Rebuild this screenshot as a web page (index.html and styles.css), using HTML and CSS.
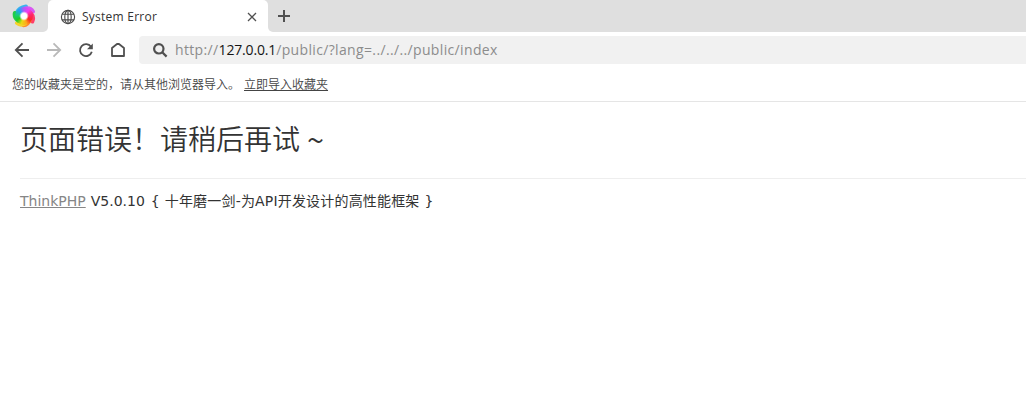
FILE: index.html
```html
<!DOCTYPE html>
<html lang="zh-CN">
<head>
<meta charset="utf-8">
<title>System Error</title>
<link rel="stylesheet" href="styles.css">
</head>
<body>
<header class="tabs">
  <div class="brand">
    <div class="logo">
      <svg width="24" height="24" viewBox="0 0 24 24" fill="none" stroke-width="4" stroke-linecap="round">
        <path d="M4.5 9Q7 3.5 14 2.5" stroke="#38b2ee"/>
        <path d="M12 5Q18 3 21 7.5" stroke="#d957f2"/>
        <path d="M18.5 9Q22.5 13 20.3 17.5" stroke="#ff3d68"/>
        <path d="M18 15.5Q16 21 11.5 21.2" stroke="#ff8a2c"/>
        <path d="M13 19.5Q8.5 22 5 19" stroke="#f6d22a"/>
        <path d="M6 16.5Q2 13.5 2.8 9" stroke="#1fcd48"/>
      </svg>
      <span class="ring"></span>
    </div>
  </div>
  <div class="tab">
    <svg class="globe" width="16" height="16" viewBox="0 0 16 16" fill="none" stroke="#4b4b4b" stroke-width="1.15"><circle cx="8" cy="8" r="6.6"/><ellipse cx="8" cy="8" rx="3.2" ry="6.6"/><path d="M8 1.4v13.2M2.2 5.2h11.6M2.2 10.8h11.6"/></svg>
    <span class="title">System Error</span>
    <svg class="close" width="10" height="10" viewBox="0 0 10 10" stroke="#505050" stroke-width="1.3"><path d="M1 1l8 8M9 1l-8 8"/></svg>
  </div>
  <div class="newtab"><svg width="12" height="12" viewBox="0 0 12 12" stroke="#505050" stroke-width="2"><path d="M0 6h12M6 0v12"/></svg></div>
</header>
<nav class="toolbar">
  <svg width="16" height="16" viewBox="0 0 16 16" fill="none" stroke="#505050" stroke-width="1.8"><path d="M15 8H2M8.5 1.3L1.8 8l6.7 6.7"/></svg>
  <svg width="16" height="16" viewBox="0 0 16 16" fill="none" stroke="#b9b9b9" stroke-width="1.8"><path d="M1 8h13M7.5 1.3L14.2 8l-6.7 6.7"/></svg>
  <svg width="16" height="16" viewBox="0 0 16 16" fill="none" stroke="#505050" stroke-width="1.8"><path d="M13 4.7A6 6 0 1 0 13.8 9.8"/><path d="M14.8 1.4v5.8H9z" fill="#505050" stroke="none"/></svg>
  <svg width="16" height="16" viewBox="0 0 16 16" fill="none" stroke="#505050" stroke-width="1.8" stroke-linejoin="round"><path d="M2 6L7 2h2l5 4v8H2z"/></svg>
  <div class="address">
    <svg width="16" height="16" viewBox="0 0 16 16" fill="none" stroke="#505050" stroke-width="2.2"><circle cx="6.8" cy="6.8" r="4.7"/><path d="M10 10l4.6 4.6"/></svg>
    <span class="url"><span class="scheme">http://</span><span class="host">127.0.0.1</span><span class="path">/public/?lang=../../../public/index</span></span>
  </div>
</nav>
<div class="bookmarks"><span>您的收藏夹是空的&#xFF0C;请从其他浏览器导入&#x3002;</span><a>立即导入收藏夹</a></div>
<main class="page">
  <h1>页面错误&#xFF01;请稍后再试<span class="tilde">~</span></h1>
  <footer><a class="product">ThinkPHP</a><span class="version">V5.0.10</span><span class="brace">{</span><span class="slogan">十年磨一剑-为API开发设计的高性能框架</span><span class="brace">}</span></footer>
</main>
</body>
</html>
```
FILE: styles.css
```css
* { box-sizing: border-box; }
body { margin: 0; background: #fff; overflow: hidden; font-family: "Open Sans", "Noto Sans CJK SC", sans-serif; color: #333; }
svg { display: block; flex: none; }
.tabs { height: 32px; display: flex; background: #fff; }
.brand { width: 48px; background: #dfdfdf; border-bottom-right-radius: 5px; padding: 4px 0 0 12px; }
.logo { position: relative; width: 24px; height: 24px; }
.logo svg { filter: blur(.4px); }
.ring { position: absolute; left: 3px; top: 3px; width: 18px; height: 18px; border-radius: 50%; background: radial-gradient(circle, #fff 0 2.8px, transparent 4.8px), conic-gradient(#b457fa, #f43bf0 40deg, #ff246e 80deg, #fa2a20 125deg, #ffa51b 160deg, #ead914 200deg, #1dcc20 240deg, #15ce6e 275deg, #239ffb 320deg, #b457fa); }
.tab { width: 220px; display: flex; align-items: center; padding: 1px 11px 0 12px; background: linear-gradient(#dfdfdf, #dfdfdf) 0 0 / 100% 5px no-repeat; position: relative; }
.tab::before { content: ""; position: absolute; inset: 0; background: #fff; border-radius: 5px 5px 0 0; }
.tab > * { position: relative; }
.title { flex: 1; margin-left: 6px; font-size: 12px; line-height: 18px; letter-spacing: .24px; white-space: nowrap; }
.newtab { flex: 1; background: #dfdfdf; border-bottom-left-radius: 5px; padding: 10px; }
.toolbar { height: 36px; display: flex; align-items: center; gap: 16px; padding-left: 14px; }
.address { flex: 1; height: 28px; margin-left: -3px; background: #f1f1f1; border-radius: 4px 0 0 4px; display: flex; align-items: center; padding-left: 13px; gap: 7px; }
.url { font-family: "Open Sans", sans-serif; font-size: 14px; line-height: 20px; letter-spacing: .35px; color: #8c8c8c; white-space: nowrap; }
.host { color: #151515; letter-spacing: -.16px; }
.bookmarks { height: 34px; border-bottom: 1px solid #e5e5e5; padding: 0 12px 1px; display: flex; align-items: center; gap: 4px; font: 350 12px/18px "Noto Sans CJK SC", sans-serif; color: #444; }
.bookmarks a { text-decoration: underline; }
.page { padding: 0 0 0 20px; }
h1 { margin: 0; height: 77px; border-bottom: 1px solid #eee; padding-top: 16px; font: 350 28px/40px "Noto Sans CJK SC", sans-serif; white-space: nowrap; }
.tilde { display: inline-block; font-size: 31px; line-height: 1; margin-left: 7px; transform: translateY(2px); }
footer { display: flex; align-items: baseline; padding-top: 12px; font: 14px/20px "DejaVu Sans", "Noto Sans CJK SC", sans-serif; white-space: nowrap; }
.product { color: #868686; text-decoration: underline; margin-right: 5px; }
.version { margin-right: 6px; }
.slogan { margin: 0 5px; letter-spacing: .18px; }
```
